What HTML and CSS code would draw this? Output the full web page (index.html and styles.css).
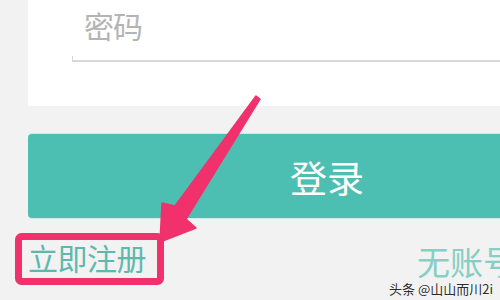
FILE: index.html
```html
<!DOCTYPE html>
<html lang="zh">
<head>
<meta charset="utf-8">
<link rel="stylesheet" href="styles.css">
</head>
<body>
<div class="page">
  <div class="card">
    <div class="field">
      <span class="tick"></span>
      <span class="placeholder">密码</span>
    </div>
  </div>
  <div class="login-btn"><span>登录</span></div>
  <div class="links">
    <span class="register">立即注册</span>
    <span class="noacct">无账号</span>
  </div>
  <svg class="annot" width="500" height="300" viewBox="0 0 500 300">
    <rect x="18.5" y="236.5" width="142" height="45" rx="3" fill="none" stroke="#f1316c" stroke-width="7"/>
    <polygon points="256,96 260,99 186,219 196,228 160,242 162,203 175,206" fill="#f1316c" stroke="#f1316c" stroke-width="1.5" stroke-linejoin="round"/>
  </svg>
  <div class="watermark">头条 @山山而川2i</div>
</div>
</body>
</html>
```

FILE: styles.css
```css
html, body {
  margin: 0;
  padding: 0;
}
body {
  background: #f2f2f2;
  width: 500px;
  height: 300px;
  overflow: hidden;
  font-family: "Noto Sans CJK SC", "Noto Sans", sans-serif;
}
.page {
  position: relative;
  width: 500px;
  height: 300px;
  overflow: hidden;
}
.card {
  margin-left: 28px;
  height: 106px;
  background: #ffffff;
  padding-left: 44px;
  box-sizing: border-box;
}
.field {
  position: relative;
  padding-top: 10px;
  padding-left: 12px;
  height: 50px;
  border-bottom: 2px solid #d8d8d8;
}
.tick {
  position: absolute;
  left: 0;
  bottom: 0;
  width: 1px;
  height: 4px;
  background: #d8d8d8;
}
.placeholder {
  display: block;
  font-size: 30px;
  line-height: 30px;
  color: #b4b4b4;
  letter-spacing: -1px;
}
.login-btn {
  margin-top: 28px;
  margin-left: 28px;
  width: 520px;
  height: 84px;
  background: #4dbfb2;
  border-radius: 4px;
  box-shadow: 0 -1px 0 #c9eeea, 0 1px 0 #c9eeea;
  display: flex;
  align-items: center;
  padding-left: 262px;
  box-sizing: border-box;
}
.login-btn span {
  color: #ffffff;
  font-size: 37px;
  line-height: 37px;
  margin-top: 2px;
}
.links {
  display: flex;
  align-items: flex-start;
  padding-top: 24px;
  padding-left: 28px;
  white-space: nowrap;
}
.register {
  font-size: 30px;
  line-height: 30px;
  color: #5db9ad;
  letter-spacing: -0.5px;
}
.noacct {
  margin-left: 271px;
  margin-top: 3px;
  font-size: 33px;
  line-height: 33px;
  color: #86cfc4;
}
.annot {
  position: absolute;
  left: 0;
  top: 0;
}
.watermark {
  position: absolute;
  left: 389px;
  top: 281px;
  font-size: 13px;
  line-height: 16px;
  color: #2a2a2a;
  text-shadow: 0 0 2px #ffffff, 0 0 1px #ffffff;
  white-space: nowrap;
}
```
